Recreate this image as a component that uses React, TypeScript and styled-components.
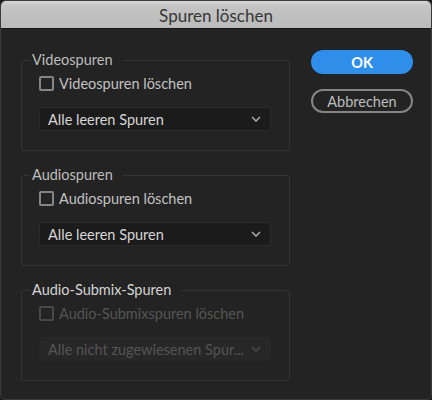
import React from 'react'
import styled, { createGlobalStyle } from 'styled-components'

const GlobalStyle = createGlobalStyle`
  html, body {
    margin: 0;
    padding: 0;
    background: #1e1e1e;
  }
  body {
    font-family: Lato, "Noto Sans", sans-serif;
  }
`

const Window = styled.div`
  width: 432px;
  height: 400px;
  box-sizing: border-box;
  display: flex;
  flex-direction: column;
  background: #232323;
  border: 1px solid #3a3a3a;
  border-radius: 6px;
  overflow: hidden;
`

const TitleBar = styled.div`
  height: 28px;
  flex-shrink: 0;
  box-sizing: border-box;
  display: flex;
  align-items: center;
  justify-content: center;
  background: linear-gradient(#d6d6d6, #c4c4c4 20%, #bababa);
  border-bottom: 1px solid #161616;
  color: #363636;
  font-size: 17px;
  padding-top: 1px;
`

const Body = styled.div`
  display: flex;
  padding: 21px 0 0 20px;
`

const Groups = styled.div`
  width: 269px;
  padding-top: 2px;
  display: flex;
  flex-direction: column;
  gap: 16px;
`

const Group = styled.fieldset`
  margin: 0;
  padding: 7px 18px 19px 17px;
  border: 1px solid #353535;
  border-radius: 3px;
  display: flex;
  flex-direction: column;
  gap: 16px;
`

const Legend = styled.legend<{ $bright?: boolean }>`
  margin-left: -9px;
  padding: 0 10px 0 2px;
  font-size: 14.5px;
  line-height: 16px;
  color: ${({ $bright }) => ($bright ? '#d4d4d4' : '#bdbdbd')};
`

const CheckRow = styled.label<{ $disabled?: boolean }>`
  display: flex;
  align-items: center;
  gap: 5px;
  height: 16px;
  font-size: 14.5px;
  color: ${({ $disabled }) => ($disabled ? '#555555' : '#c2c2c2')};
`

const Box = styled.span<{ $disabled?: boolean }>`
  width: 15px;
  height: 15px;
  box-sizing: border-box;
  border: 2px solid ${({ $disabled }) => ($disabled ? '#484848' : '#858585')};
  border-radius: 2px;
  flex-shrink: 0;
`

const Select = styled.div<{ $disabled?: boolean }>`
  height: 24px;
  width: 232px;
  box-sizing: border-box;
  display: flex;
  align-items: center;
  justify-content: space-between;
  padding: 0 9px 0 8px;
  background: ${({ $disabled }) => ($disabled ? '#272727' : '#1b1b1b')};
  border: 1px solid ${({ $disabled }) => ($disabled ? '#272727' : '#2c2c2c')};
  border-radius: 3px;
  font-size: 14.5px;
  color: ${({ $disabled }) => ($disabled ? '#555555' : '#d6d6d6')};
`

const Chevron = styled.svg<{ $disabled?: boolean }>`
  width: 10px;
  height: 6px;
  stroke: ${({ $disabled }) => ($disabled ? '#4a4a4a' : '#a8a8a8')};
`

const Buttons = styled.div`
  display: flex;
  flex-direction: column;
  gap: 15px;
  margin-left: 21px;
  width: 102px;
`

const Button = styled.button<{ $primary?: boolean }>`
  height: 24px;
  box-sizing: border-box;
  border-radius: 12px;
  font-family: inherit;
  font-size: 14.5px;
  font-weight: ${({ $primary }) => ($primary ? 700 : 400)};
  color: ${({ $primary }) => ($primary ? '#ffffff' : '#bdbdbd')};
  background: ${({ $primary }) => ($primary ? '#2f8ee9' : 'transparent')};
  border: ${({ $primary }) => ($primary ? 'none' : '2px solid #858585')};
  padding: 0;
`

type Track = {
  title: string
  check: string
  option: string
  disabled?: boolean
}

const tracks: Track[] = [
  { title: 'Videospuren', check: 'Videospuren löschen', option: 'Alle leeren Spuren' },
  { title: 'Audiospuren', check: 'Audiospuren löschen', option: 'Alle leeren Spuren' },
  {
    title: 'Audio-Submix-Spuren',
    check: 'Audio-Submixspuren löschen',
    option: 'Alle nicht zugewiesenen Spur...',
    disabled: true,
  },
]

const App: React.FC = () => (
  <>
    <GlobalStyle />
    <Window>
      <TitleBar>Spuren löschen</TitleBar>
      <Body>
        <Groups>
          {tracks.map((t) => (
            <Group key={t.title}>
              <Legend $bright={t.disabled}>{t.title}</Legend>
              <CheckRow $disabled={t.disabled}>
                <Box $disabled={t.disabled} />
                {t.check}
              </CheckRow>
              <Select $disabled={t.disabled}>
                <span>{t.option}</span>
                <Chevron $disabled={t.disabled} viewBox="0 0 10 6" fill="none" strokeWidth="1.6">
                  <path d="M1 1l4 4 4-4" />
                </Chevron>
              </Select>
            </Group>
          ))}
        </Groups>
        <Buttons>
          <Button $primary>OK</Button>
          <Button>Abbrechen</Button>
        </Buttons>
      </Body>
    </Window>
  </>
)

export default App
